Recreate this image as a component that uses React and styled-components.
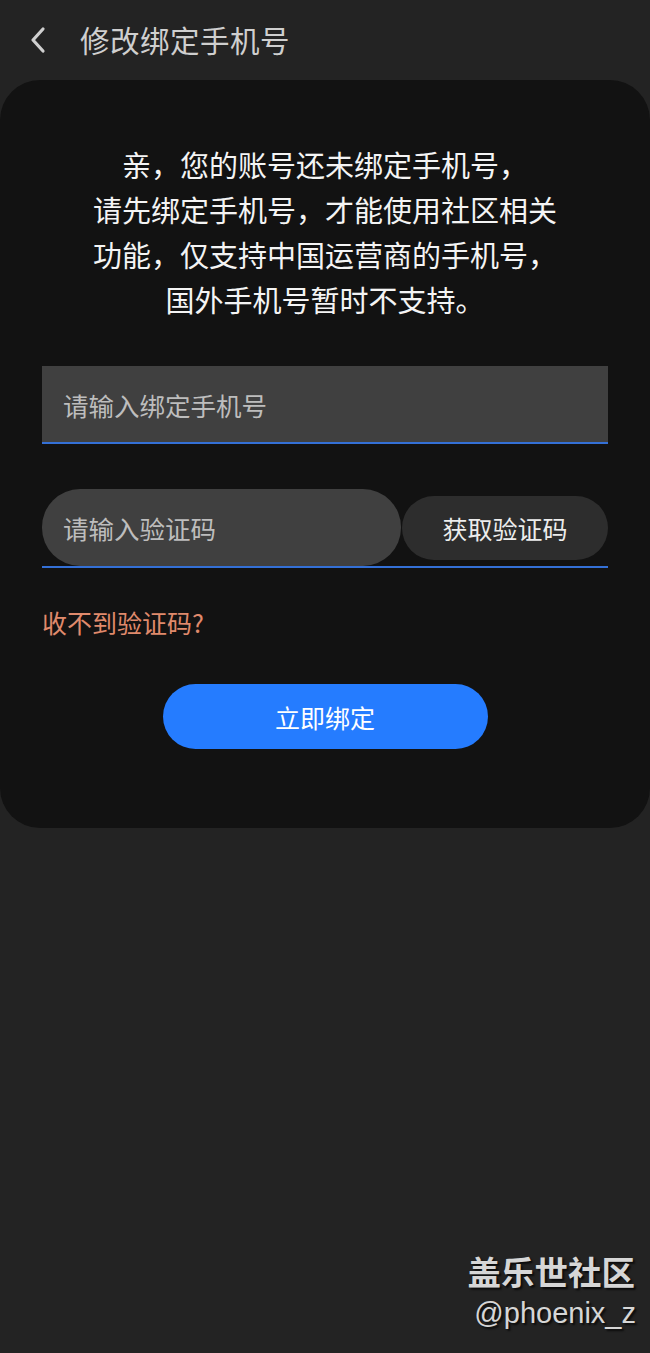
import React from 'react'
import styled, { createGlobalStyle } from 'styled-components'

const GlobalStyle = createGlobalStyle`
  html, body {
    margin: 0;
    padding: 0;
    background: #232323;
  }
  body {
    font-family: "Noto Sans CJK SC", "Noto Sans", sans-serif;
  }
`

const Page = styled.div`
  position: relative;
  min-height: 1353px;
  background: #232323;
  overflow: hidden;
`

const Header = styled.div`
  height: 80px;
  display: flex;
  align-items: center;
  padding-left: 28px;
  gap: 30px;
  color: #cfcfcf;
`

const BackButton = styled.div`
  width: 22px;
  height: 28px;
  display: flex;
  align-items: center;
  justify-content: center;
`

const Title = styled.h1`
  margin: 0 0 2px;
  font-size: 29.5px;
  font-weight: 400;
  letter-spacing: 0.5px;
  color: #cfcfcf;
`

const Card = styled.div`
  background: #121212;
  border-radius: 40px;
  padding: 62px 42px 79px;
  display: flex;
  flex-direction: column;
`

const Intro = styled.p`
  margin: 0 0 44px;
  text-align: center;
  font-size: 29px;
  line-height: 45px;
  color: #f4f4f4;
`

const PhoneField = styled.div`
  height: 76px;
  background: #404040;
  border-bottom: 2px solid #3470d6;
  display: flex;
  align-items: center;
  padding-left: 21px;
  font-size: 25.5px;
  color: #bdbdbd;
  margin-bottom: 45px;
`

const CodeRow = styled.div`
  display: flex;
  align-items: center;
  border-bottom: 2px solid #3470d6;
  margin-bottom: 36px;
`

const CodeField = styled.div`
  width: 359px;
  height: 77px;
  background: #404040;
  border-radius: 38px;
  display: flex;
  align-items: center;
  padding-left: 21px;
  box-sizing: border-box;
  font-size: 25.5px;
  color: #bdbdbd;
`

const CodeButton = styled.div`
  flex: 1;
  margin-left: 1px;
  height: 64px;
  background: #2d2d2d;
  border-radius: 32px;
  display: flex;
  align-items: center;
  justify-content: center;
  font-size: 25px;
  color: #ececec;
`

const HelpLink = styled.div`
  font-size: 25px;
  line-height: 36px;
  color: #e08a6c;
  margin-bottom: 44px;
`

const BindButton = styled.div`
  align-self: center;
  width: 325px;
  height: 65px;
  border-radius: 33px;
  background: #257cff;
  display: flex;
  align-items: center;
  justify-content: center;
  font-size: 25px;
  color: #ffffff;
`

const Watermark = styled.div`
  position: absolute;
  right: 15px;
  bottom: 20px;
  display: flex;
  flex-direction: column;
  align-items: flex-end;
  color: #d6d6d6;
  text-shadow: 2px 2px 2px rgba(0, 0, 0, 0.7);
`

const WatermarkTitle = styled.div`
  font-size: 33.5px;
  font-weight: 700;
  line-height: 44px;
`

const WatermarkUser = styled.div`
  font-family: "Liberation Sans", "Noto Sans", sans-serif;
  font-size: 29px;
  line-height: 40px;
  margin-right: -1px;
`

const Chevron = () => (
  <svg width="22" height="28" viewBox="0 0 22 28" fill="none">
    <path d="M15 3 L5 14 L15 25" stroke="#cfcfcf" strokeWidth="3.2" strokeLinecap="round" strokeLinejoin="round" />
  </svg>
)

export default function App() {
  return (
    <Page>
      <GlobalStyle />
      <Header>
        <BackButton>
          <Chevron />
        </BackButton>
        <Title>修改绑定手机号</Title>
      </Header>
      <Card>
        <Intro>
          亲，您的账号还未绑定手机号，
          <br />
          请先绑定手机号，才能使用社区相关
          <br />
          功能，仅支持中国运营商的手机号，
          <br />
          国外手机号暂时不支持。
        </Intro>
        <PhoneField>请输入绑定手机号</PhoneField>
        <CodeRow>
          <CodeField>请输入验证码</CodeField>
          <CodeButton>获取验证码</CodeButton>
        </CodeRow>
        <HelpLink>收不到验证码?</HelpLink>
        <BindButton>立即绑定</BindButton>
      </Card>
      <Watermark>
        <WatermarkTitle>盖乐世社区</WatermarkTitle>
        <WatermarkUser>@phoenix_z</WatermarkUser>
      </Watermark>
    </Page>
  )
}
